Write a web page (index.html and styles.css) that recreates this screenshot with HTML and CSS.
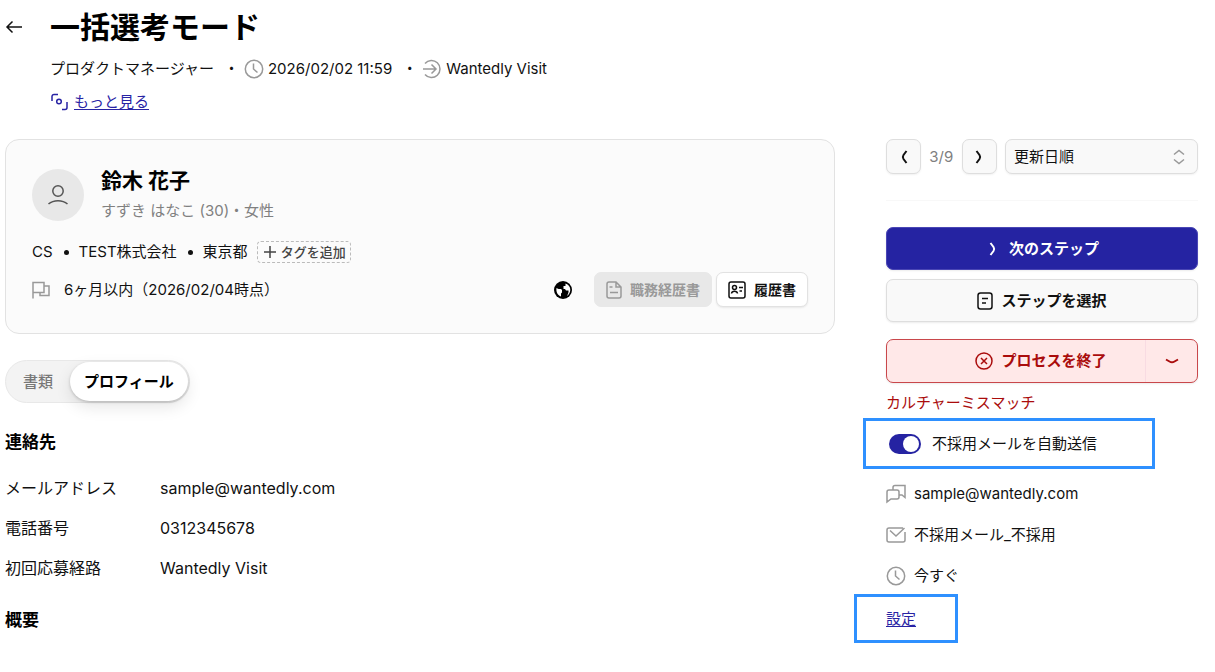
FILE: index.html
```html
<!doctype html>
<html lang="ja">
<head>
    <meta charset="UTF-8">
    <meta name="viewport" content="width=device-width, initial-scale=1">
    <title>一括選考モード</title>
    <link rel="stylesheet" href="styles.css">
</head>
<body>

<!-- shared icons -->
<svg class="sprite" aria-hidden="true">
    <symbol id="clock" viewBox="0 0 20 20"><circle cx="10" cy="10" r="8.700"/><path d="M9.500 4.500v5.500l4 3.500"/></symbol>
    <symbol id="chevron" viewBox="0 0 16 16"><path d="M5.500 2L8.500 6Q9.800 8 8.500 10L5.500 14"/></symbol>
</svg>

<header class="page-head">
    <a class="back" href="#" aria-label="戻る">
        <svg width="18" height="18" viewBox="0 0 18 18"><path d="M17 9H2M7.500 3.500L2 9l5.500 5.500"/></svg>
    </a>
    <div>
        <h1>一括選考モード</h1>
        <div class="meta">
            <span>プロダクトマネージャー</span>
            <span class="dot">・</span>
            <svg class="gray" width="20" height="20"><use href="#clock"/></svg>
            <span>2026/02/02 11:59</span>
            <span class="dot">・</span>
            <svg class="gray" width="20" height="20" viewBox="0 0 20 20"><path d="M3 4.500a8.500 8.500 0 1 1 0 11M1 10h13M9.500 5.500L14 10l-4.500 4.500"/></svg>
            <span>Wantedly Visit</span>
        </div>
        <div class="more">
            <svg width="20" height="18" viewBox="0 0 20 18"><path d="M2 8V3.500a2 2 0 0 1 2-2H8M17 9v5.500a2 2 0 0 1-2 2h-3"/><circle cx="9" cy="8.500" r="2.300"/></svg>
            <a href="#">もっと見る</a>
        </div>
    </div>
</header>

<div class="layout">
    <main>
        <section class="card">
            <div class="person">
                <div class="avatar">
                    <svg width="22" height="22" viewBox="0 0 22 22"><circle cx="11" cy="7" r="5.200"/><path d="M1.500 20c5-4.500 14-4.500 19 0"/></svg>
                </div>
                <div>
                    <div class="name">鈴木 花子</div>
                    <div class="kana">すずき はなこ (30)・女性</div>
                </div>
            </div>
            <div class="tags">
                <span>CS</span><i class="bullet"></i>
                <span>TEST株式会社</span><i class="bullet"></i>
                <span>東京都</span>
                <button class="add-tag" type="button">
                    <svg width="14" height="14" viewBox="0 0 14 14"><path d="M7 1v12M1 7h12"/></svg>タグを追加
                </button>
            </div>
            <div class="status">
                <svg class="gray" width="18" height="18" viewBox="0 0 18 18"><path d="M1 17.500V1.500h11v10H1M12 5h5v9.500H8v-3"/></svg>
                <span class="period">6ヶ月以内（2026/02/04時点）</span>
                <svg class="globe" width="18" height="18" viewBox="0 0 18 18"><circle class="globe-bg" cx="9" cy="9" r="9"/><path class="globe-land" d="M2.500 7l2 1h2.500l1 1v2.500l-1 1v3C4 14.500 1.800 11 2.500 7zM11.500 2.500c3 1 4.900 3.500 4.800 6.500-.1 2.500-1.500 4.800-3.300 6 1-2 1.800-3.700 1.500-5.500h-2.500l-1-1.500H9.500V5h2z"/></svg>
                <button class="doc" type="button" disabled>
                    <svg width="16" height="18" viewBox="0 0 16 18"><path d="M3 1h7l5 5v9a2 2 0 0 1-2 2H3a2 2 0 0 1-2-2V3a2 2 0 0 1 2-2zM10 1v5h5M3.500 6h3M4 11.500h8"/></svg>職務経歴書
                </button>
                <button class="doc" type="button">
                    <svg width="18" height="18" viewBox="0 0 18 18"><rect x="1" y="1" width="16" height="16" rx="2"/><circle cx="6.500" cy="6.500" r="2"/><path d="M3.500 12.500c.5-3 5.500-3 6 0M11 6.500h4M11.500 10H14"/></svg>履歴書
                </button>
            </div>
        </section>

        <nav class="tabs">
            <button type="button">書類</button>
            <button class="active" type="button">プロフィール</button>
        </nav>

        <section class="info">
            <h2>連絡先</h2>
            <dl>
                <dt>メールアドレス</dt><dd>sample@wantedly.com</dd>
                <dt>電話番号</dt><dd>0312345678</dd>
                <dt>初回応募経路</dt><dd>Wantedly Visit</dd>
            </dl>
        </section>
        <section class="info">
            <h2>概要</h2>
        </section>
    </main>

    <aside>
        <div class="pager">
            <button type="button" aria-label="前へ"><svg class="flip" width="16" height="16"><use href="#chevron"/></svg></button>
            <span>3/9</span>
            <button type="button" aria-label="次へ"><svg width="16" height="16"><use href="#chevron"/></svg></button>
            <div class="sort">
                <select aria-label="並び順"><option>更新日順</option></select>
                <svg width="12" height="16" viewBox="0 0 12 16"><path d="M1 5.500l5-4 5 4M1 10.500l5 4 5-4"/></svg>
            </div>
        </div>
        <hr>
        <div class="actions">
            <button class="btn primary" type="button"><svg width="16" height="16"><use href="#chevron"/></svg>次のステップ</button>
            <button class="btn" type="button"><svg width="16" height="18" viewBox="0 0 16 18"><rect x="1" y="1" width="14" height="16" rx="2.500"/><path d="M5 6.500h6M5 11h4"/></svg>ステップを選択</button>
        </div>
        <div class="reject">
            <button class="reject-main" type="button"><svg width="18" height="18" viewBox="0 0 18 18"><circle cx="9" cy="9" r="8"/><path d="M6 6l6 6M12 6l-6 6"/></svg>プロセスを終了</button>
            <button class="reject-more" type="button" aria-label="理由を選択"><svg width="14" height="8" viewBox="0 0 14 8"><path d="M1 2.500l3.500 2Q7 6 9.500 4.500l3.500-2"/></svg></button>
        </div>
        <div class="reason">カルチャーミスマッチ</div>
        <div class="auto marked">
            <input id="auto" type="checkbox" checked>
            <label for="auto">不採用メールを自動送信</label>
        </div>
        <ul class="mail">
            <li><svg class="gray" width="20" height="20" viewBox="0 0 20 20"><path d="M1 18V8a2 2 0 0 1 2-2h8a2 2 0 0 1 2 2v5a2 2 0 0 1-2 2H5zM7 6V3.500a2 2 0 0 1 2-2h10v12l-3-2.500h-3"/></svg>sample@wantedly.com</li>
            <li><svg class="gray" width="20" height="20" viewBox="0 0 20 20"><path d="M17 3H3a2 2 0 0 0-2 2v10a2 2 0 0 0 2 2h14a2 2 0 0 0 2-2V7M4 5.500l6 5.500 8.500-8"/></svg>不採用メール_不採用</li>
            <li><svg class="gray" width="20" height="20"><use href="#clock"/></svg>今すぐ</li>
        </ul>
        <a class="setting marked" href="#">設定</a>
    </aside>
</div>

</body>
</html>
```
FILE: styles.css
```css
*{box-sizing:border-box;margin:0;padding:0;}
body{
    padding:7px 17px 20px 5px;
    background:#fff;
    color:#111;
    font:15px/22px Inter,"Noto Sans CJK JP",sans-serif;
}
button,select{
    font:inherit;
    color:inherit;
    cursor:pointer;
}
svg{
    flex:none;
    fill:none;
    stroke:currentColor;
    stroke-width:1.5;
}
a{
    color:#2823a4;
    text-underline-offset:2px;
}
.sprite{position:absolute;width:0;height:0;}
.gray{color:#999;}

/* header */
.page-head{
    display:flex;
    gap:27px;
}
.back{
    display:flex;
    align-items:center;
    height:40px;
    color:#111;
}
h1{
    font-size:30px;
    line-height:40px;
    color:#000;
}
.meta,.more{
    display:flex;
    align-items:center;
    margin-top:11px;
}
.meta .gray{margin-right:4px;}
.dot{
    width:15px;
    margin:0 5px 0 10px;
}
.more{
    gap:4px;
    color:#2823a4;
}

.layout{
    display:grid;
    grid-template-columns:minmax(0,1fr) 312px;
    gap:51px;
    margin-top:26px;
}

/* candidate card */
.card{
    padding:27px 26px 26px;
    border:1px solid #e2e2e2;
    border-radius:14px;
    background:#fbfbfb;
}
.person{
    display:flex;
    align-items:center;
    gap:17px;
}
.avatar{
    display:flex;
    align-items:center;
    justify-content:center;
    width:52px;
    height:52px;
    border-radius:50%;
    background:#e8e8e8;
    color:#555;
}
.name{
    font-size:21px;
    font-weight:700;
    line-height:28px;
    color:#000;
}
.kana{
    margin-top:4px;
    line-height:24px;
    color:#808080;
}
.tags{
    display:flex;
    align-items:center;
    height:24px;
    margin-top:17px;
}
.bullet{
    width:5px;
    height:5px;
    margin:0 10px 0 11px;
    border-radius:50%;
    background:#111;
}
.add-tag{
    display:flex;
    align-items:center;
    gap:4px;
    height:22px;
    margin-left:9px;
    padding:0 4px 0 5px;
    border:1px dashed #bbb;
    border-radius:4px;
    background:none;
    color:#444;
    font-size:13px;
    font-weight:500;
}
.status{
    display:flex;
    align-items:center;
    margin-top:8px;
}
.period{
    flex:1;
    margin-left:14px;
}
.globe{
    margin-right:14px;
    stroke:none;
}
.globe-bg{fill:#000;}
.globe-land{fill:#fff;}
.doc{
    display:flex;
    align-items:center;
    gap:8px;
    height:35px;
    margin-left:4px;
    padding:0 11px;
    border:1px solid #e2e2e2;
    border-radius:7px;
    background:#fff;
    box-shadow:0 1px 2px rgba(0,0,0,.08);
    font-size:14px;
    font-weight:700;
}
.doc:disabled{
    margin-left:8px;
    border-color:#e8e8e8;
    background:#e8e8e8;
    box-shadow:none;
    color:#999;
}

/* tabs */
.tabs{
    display:flex;
    width:fit-content;
    margin-top:26px;
    padding:1px;
    border:1px solid #e8e8e8;
    border-radius:22px;
    background:#f3f3f3;
}
.tabs button{
    height:39px;
    padding:0 17px 0 16px;
    border:0;
    border-radius:20px;
    background:none;
    color:#777;
    font-weight:500;
}
.tabs .active{
    padding:0 14px;
    background:#fff;
    box-shadow:0 1px 3px rgba(0,0,0,.2),0 6px 16px rgba(0,0,0,.1);
    color:#000;
    font-weight:700;
}

/* profile */
.info{margin-top:20px;}
.tabs + .info{margin-top:27px;}
h2{
    font-size:17px;
    line-height:24px;
    color:#000;
}
dl{
    display:grid;
    grid-template-columns:155px 1fr;
    margin-top:14px;
    font-size:16px;
    line-height:40px;
}

/* side column */
.pager{
    display:flex;
    align-items:center;
    justify-content:space-between;
    gap:8px;
    color:#808080;
}
.pager button,.sort select{
    height:35px;
    border:1px solid #dedede;
    border-radius:7px;
    background:#f9f9f9;
    box-shadow:0 1px 2px rgba(0,0,0,.06);
    color:#111;
}
.pager button{
    display:flex;
    align-items:center;
    justify-content:center;
    width:35px;
}
.pager button svg,.primary svg{stroke-width:2;}
.flip{transform:scaleX(-1);}
.sort{
    position:relative;
    flex:0 0 193px;
}
.sort select{
    width:100%;
    padding:0 30px 0 8px;
    appearance:none;
}
.sort svg{
    position:absolute;
    top:10px;
    right:13px;
    color:#999;
    pointer-events:none;
}
hr{
    margin:26px 0;
    border:0;
    border-top:1px solid #f8f8f8;
}
.actions{
    display:grid;
    gap:9px;
}
.btn,.reject-main{
    display:flex;
    align-items:center;
    justify-content:center;
    gap:8px;
    font-weight:700;
}
.btn{
    height:43px;
    border:1px solid #dedede;
    border-radius:7px;
    background:#f9f9f9;
    box-shadow:0 1px 2px rgba(0,0,0,.08);
}
.primary{
    border-color:#4a46b5;
    background:#2523a2;
    color:#fff;
}
.reject{
    display:flex;
    height:44px;
    margin-top:17px;
    border:1px solid #c9474b;
    border-radius:7px;
    background:#ffe8e8;
    color:#aa0c0c;
    box-shadow:0 1px 2px rgba(0,0,0,.08);
}
.reject button{
    border:0;
    background:none;
}
.reject .reject-main{
    flex:1;
    padding-left:50px;
}
.reject .reject-more{
    display:flex;
    align-items:center;
    justify-content:center;
    width:52px;
    border-left:1px solid #f8dbe2;
}
.reject-more svg{stroke-width:2;}
.reason{
    margin-top:9px;
    color:#aa0c0c;
}
.auto{
    display:flex;
    align-items:center;
    gap:11px;
    width:fit-content;
    margin:19px 0 28px 3px;
}
.auto input{
    width:32px;
    height:20px;
    padding:2px;
    border-radius:10px;
    background:#bbb;
    appearance:none;
}
.auto input::before{
    content:"";
    display:block;
    width:16px;
    height:16px;
    border-radius:50%;
    background:#fff;
}
.auto input:checked{background:#2523a2;}
.auto input:checked::before{margin-left:auto;}
.mail{
    display:grid;
    gap:19px;
    margin-bottom:21px;
    list-style:none;
}
.mail li{
    display:flex;
    align-items:center;
    gap:8px;
}

/* blue callout frames drawn over the page */
.marked{position:relative;}
.marked::after{
    content:"";
    position:absolute;
    border:3px solid #2e90ff;
    pointer-events:none;
}
.auto::after{inset:-15px -58px -14px -26px;}
.setting::after{inset:-15px -42px -15px -32px;}
```
